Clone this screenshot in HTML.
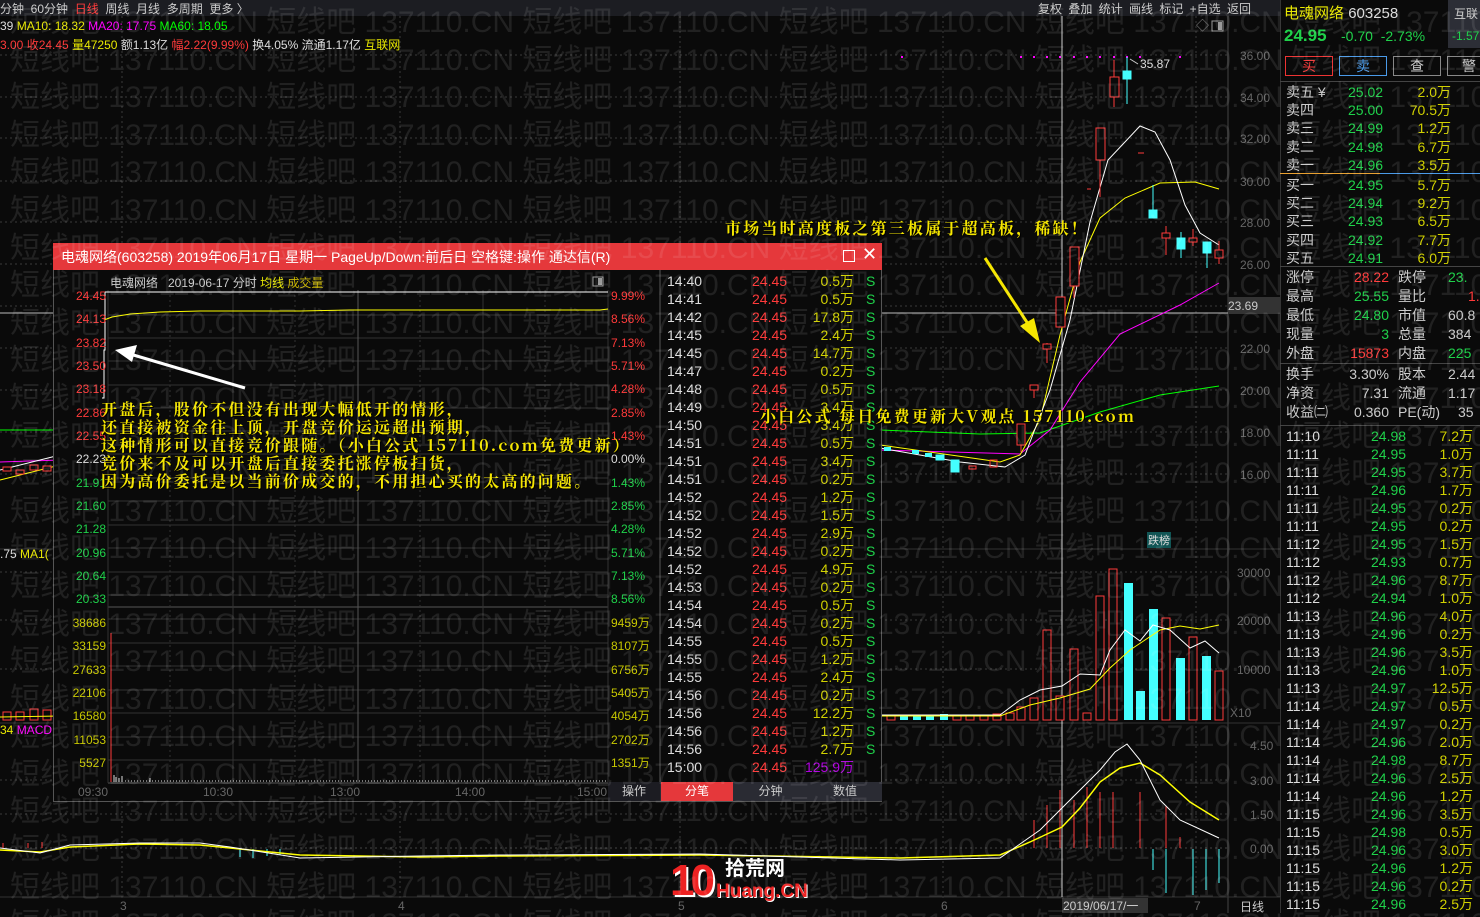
<!DOCTYPE html>
<html><head><meta charset="utf-8"><style>
*{margin:0;padding:0;box-sizing:border-box}
body{width:1480px;height:913px;background:#0a0a0a;overflow:hidden;position:relative;font-family:"Liberation Sans","Noto Sans CJK SC",sans-serif;font-size:12px;color:#ccc}
.a{position:absolute;white-space:nowrap}
.y{color:#e8e800}.r{color:#ff3a3a}.g{color:#1fd14a}.w{color:#ddd}.m{color:#ff00ff}.gr{color:#0f0}
#wm{position:absolute;left:0;top:4px;width:1480px;height:913px;overflow:hidden;pointer-events:none;color:rgba(255,255,255,0.095);font-size:30px;line-height:37.6px;white-space:nowrap;z-index:50;font-family:"Liberation Sans","Noto Sans CJK SC",sans-serif}
.ann{font-family:"Noto Serif CJK SC","Liberation Serif",serif;font-weight:bold;color:#f5e600;font-size:16px;letter-spacing:2.2px;text-shadow:1px 1px 0 #000;z-index:40}
.rp div{position:absolute;white-space:nowrap}
</style></head><body>

<div class="a" style="left:0;top:0;width:1280px;height:16px;background:#1c1d22"></div>
<div class="a" style="left:0;top:0;font-size:12px;color:#ccc">分钟 &nbsp;60分钟 &nbsp;<span class="r">日线</span> &nbsp;周线 &nbsp;月线 &nbsp;多周期 &nbsp;更多 〉</div>
<div class="a" style="left:1038px;top:0;font-size:12px;color:#ccc;word-spacing:3px">复权 叠加 统计 画线 标记 +自选 返回</div>
<div class="a" style="left:0;top:19px"><span class="w">39</span> <span class="y">MA10: 18.32</span> <span class="m">MA20: 17.75</span> <span class="gr">MA60: 18.05</span></div>
<div class="a" style="left:0;top:36px"><span class="r">3.00 收24.45</span> <span class="y">量47250</span> <span class="w">额1.13亿</span> <span class="r">幅2.22(9.99%)</span> <span class="w">换4.05% 流通1.17亿</span> <span class="y">互联网</span></div>

<svg class="a" style="left:0;top:0" width="1280" height="913" viewBox="0 0 1280 913">
<g stroke="#3a3a3a" stroke-dasharray="2,3" stroke-width="1">
<line x1="0" y1="55" x2="1228" y2="55"/><line x1="0" y1="97" x2="1228" y2="97"/><line x1="0" y1="138" x2="1228" y2="138"/><line x1="0" y1="181" x2="1228" y2="181"/><line x1="0" y1="222" x2="1228" y2="222"/><line x1="0" y1="264" x2="1228" y2="264"/><line x1="0" y1="306" x2="1228" y2="306"/><line x1="0" y1="348" x2="1228" y2="348"/><line x1="0" y1="390" x2="1228" y2="390"/><line x1="0" y1="432" x2="1228" y2="432"/><line x1="0" y1="474" x2="1228" y2="474"/>
<line x1="0" y1="572" x2="1228" y2="572"/><line x1="0" y1="620" x2="1228" y2="620"/><line x1="0" y1="669" x2="1228" y2="669"/>
<line x1="0" y1="780" x2="1228" y2="780"/><line x1="0" y1="814" x2="1228" y2="814"/>
<line x1="122" y1="16" x2="122" y2="900"/><line x1="400" y1="16" x2="400" y2="900"/><line x1="680" y1="16" x2="680" y2="900"/><line x1="943" y1="16" x2="943" y2="900"/><line x1="1196" y1="16" x2="1196" y2="900"/>
</g>
<line x1="1228" y1="16" x2="1228" y2="913" stroke="#444"/>
<line x1="0" y1="549" x2="1280" y2="549" stroke="#333"/>
<line x1="0" y1="723" x2="1280" y2="723" stroke="#333"/>
<line x1="0" y1="897" x2="1280" y2="897" stroke="#333"/>
<line x1="0" y1="848" x2="1228" y2="848" stroke="#444" stroke-dasharray="2,3"/>
<line x1="0" y1="313" x2="1228" y2="313" stroke="#bbb"/>
<line x1="1062" y1="16" x2="1062" y2="897" stroke="#ccc"/>
<g fill="#666" font-size="12" font-family="Liberation Sans">
<text x="1240" y="60">36.00</text><text x="1240" y="102">34.00</text><text x="1240" y="143">32.00</text><text x="1240" y="186">30.00</text><text x="1240" y="227">28.00</text><text x="1240" y="269">26.00</text><text x="1240" y="353">22.00</text><text x="1240" y="395">20.00</text><text x="1240" y="437">18.00</text><text x="1240" y="479">16.00</text>
<text x="1237" y="577">30000</text><text x="1237" y="625">20000</text><text x="1237" y="674">10000</text><text x="1230" y="717">X10</text>
<text x="1250" y="750">4.50</text><text x="1250" y="785">3.00</text><text x="1250" y="819">1.50</text><text x="1250" y="853">0.00</text>
<text x="120" y="910">3</text><text x="398" y="910">4</text><text x="678" y="910">5</text><text x="941" y="910">6</text><text x="1194" y="910">7</text>
</g>
<rect x="1228" y="297" width="52" height="17" fill="#333"/>
<text x="1228" y="310" fill="#ccc" font-size="12" font-family="Liberation Sans">23.69</text>
<rect x="1062" y="898" width="86" height="15" fill="#333"/>
<text x="1063" y="910" fill="#ccc" font-size="12" font-family="Liberation Sans">2019/06/17/一</text>
<text x="1240" y="911" fill="#ccc" font-size="12">日线</text>
<text x="1196" y="30" fill="#888" font-size="13">◇</text>
<rect x="1212" y="21" width="11" height="10" fill="none" stroke="#999"/><rect x="1218" y="22" width="4" height="8" fill="#999"/>
<g fill="#ff00ff"><rect x="901" y="56" width="2" height="2"/><rect x="1020" y="56" width="2" height="2"/><rect x="1033" y="56" width="2" height="2"/><rect x="1046" y="56" width="2" height="2"/><rect x="1059" y="56" width="2" height="2"/><rect x="1073" y="56" width="2" height="2"/><rect x="1086" y="56" width="2" height="2"/><rect x="1099" y="56" width="2" height="2"/><rect x="1113" y="56" width="2" height="2"/><rect x="1126" y="56" width="2" height="2"/><rect x="1139" y="56" width="2" height="2"/><rect x="1179" y="56" width="2" height="2"/></g>
<polyline fill="none" stroke="#0f0" points="0,430 60,430 880,430 980,434 1040,433 1100,412 1160,395 1219,386"/>
<polyline fill="none" stroke="#ff00ff" points="0,462 60,460 880,450 1020,454 1050,430 1080,382 1120,334 1180,305 1219,283"/>
<polyline fill="none" stroke="#ff0" points="0,480 60,465 880,445 1000,462 1020,455 1040,420 1060,335 1080,262 1100,218 1125,198 1160,183 1195,182 1219,189"/>
<polyline fill="none" stroke="#fff" points="0,470 60,455 880,448 960,462 1005,467 1025,455 1050,390 1070,320 1090,222 1108,160 1140,126 1155,132 1170,160 1185,205 1200,233 1219,245"/>
<g stroke="#ff3a3a" fill="#0a0a0a">
<line x1="1034" y1="385" x2="1034" y2="398"/><rect x="1030" y="385" width="8" height="5"/>
<line x1="1047" y1="343" x2="1047" y2="363"/><rect x="1043" y="344" width="8" height="5"/>
<line x1="1021" y1="424" x2="1021" y2="452"/><rect x="1017" y="424" width="8" height="21"/>
<rect x="1056" y="297" width="9" height="30"/>
<line x1="1074" y1="286" x2="1074" y2="298"/><rect x="1070" y="247" width="9" height="39"/>
<line x1="1100" y1="160" x2="1100" y2="197"/><rect x="1096" y="128" width="9" height="32"/>
<line x1="1114" y1="60" x2="1114" y2="107"/><rect x="1110" y="77" width="9" height="20"/>
<line x1="1087" y1="189" x2="1091" y2="189"/><line x1="1138" y1="153" x2="1144" y2="153"/>
<line x1="1166" y1="226" x2="1166" y2="255"/><rect x="1162" y="233" width="8" height="5"/>
<line x1="1193" y1="229" x2="1193" y2="246"/><rect x="1189" y="238" width="8" height="4"/>
<line x1="1219" y1="241" x2="1219" y2="264"/><rect x="1215" y="250" width="8" height="8"/>
<rect x="3" y="467" width="8" height="4"/><rect x="16" y="470" width="8" height="4"/><rect x="30" y="465" width="8" height="5"/><rect x="43" y="466" width="8" height="5"/>
<rect x="3" y="712" width="8" height="8"/><rect x="16" y="712" width="8" height="8"/><rect x="30" y="709" width="8" height="11"/><rect x="43" y="710" width="8" height="10"/>
</g>
<g stroke="#4ff" fill="#4ff">
<line x1="1127" y1="57" x2="1127" y2="104"/><rect x="1123" y="71" width="8" height="8"/>
<line x1="1153" y1="185" x2="1153" y2="218"/><rect x="1149" y="210" width="8" height="8"/>
<line x1="1181" y1="232" x2="1181" y2="258"/><rect x="1177" y="238" width="8" height="11"/>
<line x1="1207" y1="242" x2="1207" y2="268"/><rect x="1203" y="242" width="8" height="11"/>
<rect x="951" y="460" width="8" height="12"/><rect x="936" y="455" width="8" height="5"/>
</g>
<text x="1140" y="68" fill="#ddd" font-size="12">35.87</text>
<polyline fill="none" stroke="#ccc" points="1138,64 1130,59"/>
<g stroke="#ff3a3a" fill="none"><rect x="969" y="466" width="7" height="3"/><rect x="990" y="460" width="7" height="7"/></g>
<g fill="#4ff"><rect x="884" y="447" width="7" height="4"/><rect x="912" y="450" width="7" height="4"/><rect x="925" y="453" width="7" height="4"/></g>
<g fill="#0a0a0a" stroke="#ff3a3a">
<rect x="1017" y="707" width="8" height="13"/><rect x="1030" y="698" width="8" height="22"/><rect x="1043" y="630" width="8" height="90"/><rect x="1056" y="696" width="8" height="24"/><rect x="1070" y="649" width="8" height="71"/><rect x="1083" y="713" width="8" height="7"/><rect x="1096" y="596" width="8" height="124"/><rect x="1109" y="569" width="8" height="151"/><rect x="1162" y="618" width="8" height="102"/><rect x="1189" y="637" width="8" height="83"/><rect x="1215" y="671" width="8" height="49"/>
<rect x="887" y="715" width="8" height="5"/><rect x="953" y="715" width="8" height="5"/><rect x="966" y="715" width="8" height="5"/><rect x="980" y="715" width="8" height="5"/><rect x="993" y="714" width="8" height="6"/><rect x="1006" y="713" width="8" height="7"/>
</g>
<g fill="#4ff"><rect x="1124" y="583" width="9" height="137"/><rect x="1136" y="691" width="9" height="29"/><rect x="1149" y="609" width="9" height="111"/><rect x="1176" y="658" width="9" height="62"/><rect x="1202" y="656" width="9" height="64"/>
<rect x="900" y="715" width="8" height="5"/><rect x="913" y="715" width="8" height="5"/><rect x="926" y="715" width="8" height="5"/><rect x="940" y="714" width="8" height="6"/></g>
<polyline fill="none" stroke="#ff0" points="880,716 1000,716 1030,705 1060,698 1090,689 1110,668 1130,650 1160,630 1180,626 1200,629 1219,625"/>
<polyline fill="none" stroke="#fff" points="880,715 1000,715 1020,700 1040,690 1062,686 1080,674 1100,675 1110,650 1125,630 1140,641 1153,625 1170,630 1190,648 1205,641 1219,653"/>
<polyline fill="none" stroke="#ff0" points="0,717 60,716"/>
<g stroke="#ff3a3a"><line x1="1034" y1="848" x2="1034" y2="820"/><line x1="1047" y1="848" x2="1047" y2="805"/><line x1="1060" y1="848" x2="1060" y2="790"/><line x1="1074" y1="848" x2="1074" y2="800"/><line x1="1087" y1="848" x2="1087" y2="787"/><line x1="1100" y1="848" x2="1100" y2="792"/><line x1="1113" y1="848" x2="1113" y2="792"/><line x1="1140" y1="848" x2="1140" y2="792"/><line x1="1166" y1="848" x2="1166" y2="806"/><line x1="1180" y1="848" x2="1180" y2="837"/>
<line x1="3" y1="848" x2="3" y2="843"/><line x1="28" y1="848" x2="28" y2="843"/><line x1="42" y1="848" x2="42" y2="842"/></g>
<g stroke="#4ff"><line x1="1153" y1="849" x2="1153" y2="870"/><line x1="1166" y1="849" x2="1166" y2="893"/><line x1="1193" y1="849" x2="1193" y2="895"/><line x1="1206" y1="849" x2="1206" y2="890"/><line x1="1219" y1="849" x2="1219" y2="883"/>
<line x1="240" y1="849" x2="240" y2="857"/><line x1="253" y1="849" x2="253" y2="858"/><line x1="267" y1="849" x2="267" y2="856"/><line x1="280" y1="849" x2="280" y2="855"/></g>
<polyline fill="none" stroke="#ff0" stroke-width="1.5" points="0,850 40,852 70,847 140,844 200,845 230,848 300,855 420,857 500,856 700,855 900,858 1000,855 1030,842 1062,827 1080,808 1100,782 1120,768 1140,763 1160,775 1190,802 1219,820"/>
<polyline fill="none" stroke="#fff" points="0,848 40,853 70,845 140,843 200,843 230,847 300,858 420,856 500,855 700,854 900,860 1000,858 1040,830 1062,808 1100,770 1115,752 1127,744 1140,760 1160,800 1180,820 1219,838"/>
<line x1="985" y1="258" x2="1030" y2="327" stroke="#f5e600" stroke-width="3"/>
<polygon points="1040,343 1020,326 1034,318" fill="#f5e600"/>
</svg>
<div class="a" style="left:0;top:547px;color:#ddd">.75 <span class="y">MA1(</span></div>
<div class="a" style="left:0;top:723px;color:#e8e800">34 <span class="m">MACD</span></div>

<div class="a ann" style="left:725px;top:216px">市场当时高度板之第三板属于超高板，稀缺！</div>
<div class="a ann" style="left:760px;top:404px">小白公式 每日免费更新大V观点 157110.com</div>
<div class="a" style="left:1147px;top:532px;background:#155;color:#ddd;font-size:11px;padding:0 1px">跌榜</div>

<div class="a" style="left:670px;top:858px;font:bold 44px/46px 'Liberation Sans',sans-serif;color:#e22;letter-spacing:-4px;text-shadow:2px 2px 0 #fff">10</div>
<div class="a" style="left:725px;top:858px;font-size:20px;color:#fff;line-height:22px;font-weight:bold">拾荒网</div>
<div class="a" style="left:716px;top:881px;font:bold 19px/22px 'Liberation Sans',sans-serif;color:#e22;text-shadow:1px 1px 0 #fff">Huang.CN</div>

<div class="a" style="left:53px;top:243px;width:829px;height:559px;background:#0a0a0a;border:1px solid #555"></div>
<div class="a" style="left:53px;top:243px;width:829px;height:27px;background:#e5383b;color:#fff;font-size:14px;line-height:28px;padding-left:8px">电魂网络(603258) 2019年06月17日 星期一 PageUp/Down:前后日 空格键:操作 通达信(R)</div>
<div class="a" style="left:843px;top:250px;width:12px;height:12px;border:1px solid #fff"></div>
<div class="a" style="left:862px;top:244px;color:#fff;font-size:18px">✕</div>
<svg class="a" style="left:53px;top:270px" width="829" height="532" viewBox="53 270 829 532">
<g stroke="#333"><line x1="108" y1="292" x2="608" y2="292"/><line x1="108" y1="315" x2="608" y2="315"/><line x1="108" y1="338" x2="608" y2="338"/><line x1="108" y1="361" x2="608" y2="361"/><line x1="108" y1="385" x2="608" y2="385"/><line x1="108" y1="408" x2="608" y2="408"/><line x1="108" y1="431" x2="608" y2="431"/><line x1="108" y1="454" x2="608" y2="454"/><line x1="108" y1="478" x2="608" y2="478"/><line x1="108" y1="501" x2="608" y2="501"/><line x1="108" y1="525" x2="608" y2="525"/><line x1="108" y1="548" x2="608" y2="548"/><line x1="108" y1="572" x2="608" y2="572"/><line x1="108" y1="595" x2="608" y2="595"/><line x1="108" y1="619" x2="608" y2="619"/><line x1="108" y1="643" x2="608" y2="643"/><line x1="108" y1="666" x2="608" y2="666"/><line x1="108" y1="690" x2="608" y2="690"/><line x1="108" y1="713" x2="608" y2="713"/><line x1="108" y1="737" x2="608" y2="737"/><line x1="108" y1="760" x2="608" y2="760"/>
<line x1="108" y1="607" x2="608" y2="607" stroke="#555"/>
<line x1="108" y1="783" x2="660" y2="783" stroke="#555"/>
<line x1="108" y1="290" x2="108" y2="783"/><line x1="608" y1="290" x2="608" y2="783"/><line x1="660" y1="270" x2="660" y2="802" stroke="#555"/>
<line x1="233" y1="290" x2="233" y2="783"/><line x1="358" y1="290" x2="358" y2="783" stroke="#555"/><line x1="483" y1="290" x2="483" y2="783"/>
<line x1="170" y1="290" x2="170" y2="783" stroke-dasharray="2,3"/><line x1="295" y1="290" x2="295" y2="783" stroke-dasharray="2,3"/><line x1="420" y1="290" x2="420" y2="783" stroke-dasharray="2,3"/><line x1="545" y1="290" x2="545" y2="783" stroke-dasharray="2,3"/>
</g>
<polyline fill="none" stroke="#fff" points="102,398 104,398 104,350 105,350 105,292 608,292"/>
<polyline fill="none" stroke="#ff0" points="104,320 112,317 130,314 160,312 200,311 300,311 350,310 600,310 608,309"/>
<line x1="111" y1="633" x2="111" y2="782" stroke="#ff3a3a"/>
<g stroke="#ddd"><line x1="114" y1="775" x2="114" y2="782"/><line x1="116" y1="777" x2="116" y2="782"/><line x1="119" y1="778" x2="119" y2="782"/><line x1="122" y1="776" x2="122" y2="782"/><line x1="150" y1="778" x2="150" y2="782"/></g>
<line x1="125" y1="781" x2="608" y2="781" stroke="#ddd" stroke-dasharray="1,2"/>
<line x1="245" y1="388" x2="130" y2="354" stroke="#fff" stroke-width="3"/>
<polygon points="115,350 137,345 132,362" fill="#fff"/>
<rect x="593" y="277" width="10" height="9" fill="none" stroke="#999"/><rect x="598" y="278" width="4" height="7" fill="#999"/>
<g font-size="12" font-family="Liberation Sans" fill="#666"><text x="78" y="796">09:30</text><text x="203" y="796">10:30</text><text x="330" y="796">13:00</text><text x="455" y="796">14:00</text><text x="577" y="796">15:00</text></g>
</svg>
<div class="a" style="left:110px;top:274px;color:#ccc">电魂网络 &nbsp;&nbsp;2019-06-17 分时 <span class="y">均线</span> <span style="color:#c8b400">成交量</span></div>
<div class="a" style="left:60px;top:285px;width:46px;text-align:right;line-height:23.35px;font-size:12px">
<div class="r">24.45</div><div class="r">24.13</div><div class="r">23.82</div><div class="r">23.50</div><div class="r">23.18</div><div class="r">22.86</div><div class="r">22.55</div><div class="w">22.23</div><div class="g">21.91</div><div class="g">21.60</div><div class="g">21.28</div><div class="g">20.96</div><div class="g">20.64</div><div class="g">20.33</div>
<div style="color:#c8c800">38686</div><div style="color:#c8c800">33159</div><div style="color:#c8c800">27633</div><div style="color:#c8c800">22106</div><div style="color:#c8c800">16580</div><div style="color:#c8c800">11053</div><div style="color:#c8c800">5527</div></div>
<div class="a" style="left:611px;top:285px;line-height:23.35px;font-size:12px">
<div class="r">9.99%</div><div class="r">8.56%</div><div class="r">7.13%</div><div class="r">5.71%</div><div class="r">4.28%</div><div class="r">2.85%</div><div class="r">1.43%</div><div class="w">0.00%</div><div class="g">1.43%</div><div class="g">2.85%</div><div class="g">4.28%</div><div class="g">5.71%</div><div class="g">7.13%</div><div class="g">8.56%</div>
<div style="color:#c8c800">9459万</div><div style="color:#c8c800">8107万</div><div style="color:#c8c800">6756万</div><div style="color:#c8c800">5405万</div><div style="color:#c8c800">4054万</div><div style="color:#c8c800">2702万</div><div style="color:#c8c800">1351万</div></div>

<div class="a ann" style="left:101px;top:400px;line-height:18px">开盘后，股价不但没有出现大幅低开的情形，<br>还直接被资金往上顶，开盘竞价运远超出预期，<br>这种情形可以直接竞价跟随。（小白公式 157110.com免费更新）<br>竞价来不及可以开盘后直接委托涨停板扫货，<br>因为高价委托是以当前价成交的，不用担心买的太高的问题。</div>

<div class="a" style="left:667px;top:272px;font-size:14px;line-height:18px;color:#ddd" id="tl"></div>
<div class="a" style="left:660px;top:782px;width:222px;height:19px;background:#2a2b33"></div>
<div class="a" style="left:608px;top:782px;width:52px;height:19px;background:#1c1c22;color:#ccc;text-align:center;line-height:19px">操作</div>
<div class="a" style="left:661px;top:782px;width:72px;height:19px;background:#e5383b;color:#fff;text-align:center;line-height:19px">分笔</div>
<div class="a" style="left:733px;top:782px;width:75px;height:19px;color:#ccc;text-align:center;line-height:19px">分钟</div>
<div class="a" style="left:808px;top:782px;width:74px;height:19px;color:#ccc;text-align:center;line-height:19px">数值</div>

<div class="a" style="left:1280px;top:0;width:200px;height:913px;background:#0a0a0a;border-left:1px solid #333"></div>
<div class="rp" style="position:absolute;left:0;top:0;font-size:14px">
<div style="left:1284px;top:2px;font-size:15px"><span class="y">电魂网络</span> <span class="w">603258</span></div>
<div style="left:1284px;top:26px;font-size:17px;font-weight:bold" class="g">24.95</div>
<div style="left:1341px;top:28px" class="g">-0.70 &nbsp;-2.73%</div>
<div style="left:1448px;top:0;width:32px;height:48px;background:#2c2e36"></div>
<div style="left:1454px;top:5px;font-size:12px;color:#ccc">互联</div>
<div style="left:1452px;top:29px;font-size:12px" class="g">-1.57</div>
<div style="left:1285px;top:56px;width:48px;height:20px;border:1px solid #e33;color:#e33;text-align:center;line-height:18px">买</div>
<div style="left:1339px;top:56px;width:48px;height:20px;border:1px solid #4a9ae8;color:#4a9ae8;text-align:center;line-height:18px">卖</div>
<div style="left:1393px;top:56px;width:48px;height:20px;border:1px solid #888;color:#ccc;text-align:center;line-height:18px">查</div>
<div style="left:1447px;top:56px;width:40px;height:20px;border:1px solid #888;color:#ccc;padding-left:14px;line-height:18px">警</div>
<div style="left:1280px;top:81px;width:200px;height:1px;background:#444"></div>
<div style="left:1280px;top:173px;width:100px;height:1px;background:#e8a030"></div>
<div style="left:1380px;top:173px;width:100px;height:1px;background:#4a9ae8"></div>
<div style="left:1280px;top:266px;width:200px;height:1px;background:#444"></div>
<div style="left:1280px;top:363px;width:200px;height:1px;background:#444"></div>
<div style="left:1280px;top:425px;width:200px;height:1px;background:#444"></div>
</div>
<div class="a" style="left:1286px;top:83px;line-height:18.2px;font-size:14px;color:#ccc" id="ob"></div>
<div class="a" style="left:1286px;top:268px;line-height:19px;font-size:14px;color:#ccc;width:200px">
<div style="position:relative;height:19px">涨停<span class="r" style="position:absolute;left:58px;width:45px;text-align:right">28.22</span><span style="position:absolute;left:112px">跌停</span><span class="g" style="position:absolute;left:162px">23.</span></div>
<div style="position:relative;height:19px">最高<span class="g" style="position:absolute;left:58px;width:45px;text-align:right">25.55</span><span style="position:absolute;left:112px">量比</span><span class="r" style="position:absolute;left:182px">1.</span></div>
<div style="position:relative;height:19px">最低<span class="g" style="position:absolute;left:58px;width:45px;text-align:right">24.80</span><span style="position:absolute;left:112px">市值</span><span style="position:absolute;left:162px">60.8</span></div>
<div style="position:relative;height:19px">现量<span class="g" style="position:absolute;left:58px;width:45px;text-align:right">3</span><span style="position:absolute;left:112px">总量</span><span style="position:absolute;left:162px">384</span></div>
<div style="position:relative;height:21px">外盘<span class="r" style="position:absolute;left:58px;width:45px;text-align:right">15873</span><span style="position:absolute;left:112px">内盘</span><span class="g" style="position:absolute;left:162px">225</span></div>
<div style="position:relative;height:19px">换手<span style="position:absolute;left:58px;width:45px;text-align:right">3.30%</span><span style="position:absolute;left:112px">股本</span><span style="position:absolute;left:162px">2.44</span></div>
<div style="position:relative;height:19px">净资<span style="position:absolute;left:58px;width:45px;text-align:right">7.31</span><span style="position:absolute;left:112px">流通</span><span style="position:absolute;left:162px">1.17</span></div>
<div style="position:relative;height:19px">收益㈡<span style="position:absolute;left:58px;width:45px;text-align:right">0.360</span><span style="position:absolute;left:112px">PE(动)</span><span style="position:absolute;left:172px">35</span></div>
</div>
<div class="a" style="left:1286px;top:427px;line-height:18px;font-size:14px;color:#ddd" id="rt"></div>

<div id="wm"></div>
<script>
(function(){
var t=["14:40","14:41","14:42","14:45","14:45","14:47","14:48","14:49","14:50","14:51","14:51","14:51","14:52","14:52","14:52","14:52","14:52","14:53","14:54","14:54","14:55","14:55","14:55","14:56","14:56","14:56","14:56","15:00"];
var v=["0.5","0.5","17.8","2.4","14.7","0.2","0.5","3.4","3.4","0.5","3.4","0.2","1.2","1.5","2.9","0.2","4.9","0.2","0.5","0.2","0.5","1.2","2.4","0.2","12.2","1.2","2.7","125.9"];
var h="";for(var i=0;i<t.length;i++){var last=i==t.length-1;h+='<div style="position:relative;height:18px;width:210px">'+t[i]+'<span style="position:absolute;left:85px;color:#ff3a3a">24.45</span><span style="position:absolute;left:120px;width:67px;text-align:right;color:'+(last?'#b000e0':'#d0d000')+'">'+v[i]+'万</span>'+(last?'':'<span style="position:absolute;left:199px;color:#1fd14a">S</span>')+'</div>';}
document.getElementById("tl").innerHTML=h;
var ob=[["卖五 ¥","25.02","2.0"],["卖四","25.00","70.5"],["卖三","24.99","1.2"],["卖二","24.98","6.7"],["卖一","24.96","3.5"],["买一","24.95","5.7"],["买二","24.94","9.2"],["买三","24.93","6.5"],["买四","24.92","7.7"],["买五","24.91","6.0"]];
h="";for(i=0;i<ob.length;i++){h+='<div style="position:relative;height:18.2px;width:190px;'+(i==5?'margin-top:2px':'')+'">'+ob[i][0]+'<span style="position:absolute;left:62px;color:#1fd14a">'+ob[i][1]+'</span><span style="position:absolute;left:100px;width:65px;text-align:right;color:#d0d000">'+ob[i][2]+'万</span></div>';}
document.getElementById("ob").innerHTML=h;
var rt=[["11:10","24.98","7.2"],["11:11","24.95","1.0"],["11:11","24.95","3.7"],["11:11","24.96","1.7"],["11:11","24.95","0.2"],["11:11","24.95","0.2"],["11:12","24.95","1.5"],["11:12","24.93","0.7"],["11:12","24.96","8.7"],["11:12","24.94","1.0"],["11:13","24.96","4.0"],["11:13","24.96","0.2"],["11:13","24.96","3.5"],["11:13","24.96","1.0"],["11:13","24.97","12.5"],["11:14","24.97","0.5"],["11:14","24.97","0.2"],["11:14","24.96","2.0"],["11:14","24.98","8.7"],["11:14","24.96","2.5"],["11:14","24.96","1.2"],["11:15","24.96","3.5"],["11:15","24.98","0.5"],["11:15","24.96","3.0"],["11:15","24.96","1.2"],["11:15","24.96","0.2"],["11:15","24.96","2.5"]];
h="";for(i=0;i<rt.length;i++){h+='<div style="position:relative;height:18px;width:190px">'+rt[i][0]+'<span style="position:absolute;left:85px;color:#1fd14a">'+rt[i][1]+'</span><span style="position:absolute;left:120px;width:67px;text-align:right;color:#d0d000">'+rt[i][2]+'万</span></div>';}
document.getElementById("rt").innerHTML=h;
var s="";for(i=0;i<25;i++){s+='<div style="margin-left:10px">'+"短线吧 137110.CN 短线吧 137110.CN 短线吧 137110.CN 短线吧 137110.CN 短线吧 137110.CN 短线吧 137110.CN 短线吧 137110.CN"+'</div>';}
document.getElementById("wm").innerHTML=s;
})();
</script>
</body></html>
